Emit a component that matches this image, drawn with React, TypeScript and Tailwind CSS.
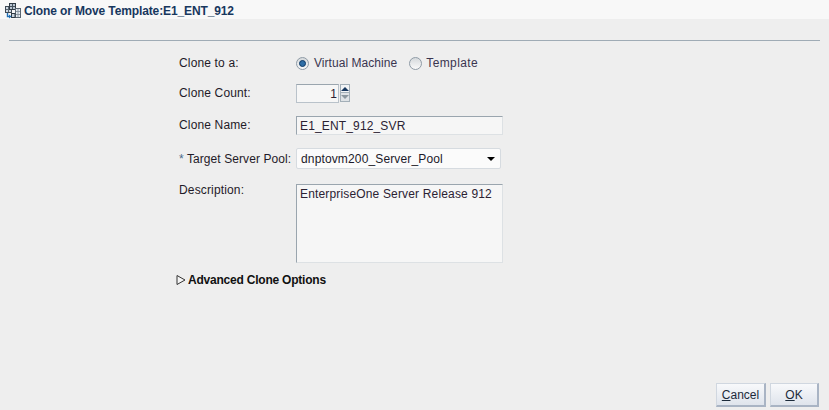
import React from 'react';

function TemplateIcon() {
  return (
    <svg width="16" height="17" viewBox="0 0 16 17" className="shrink-0">
      <rect x="0.5" y="4.5" width="6" height="6" fill="#cfd8e2" stroke="#3f4a55" />
      <path d="M1 7.5h5M3.5 5v5" stroke="#5a6672" />
      <rect x="4.5" y="1.5" width="6" height="6" fill="#b9c5d2" stroke="#2f3a45" />
      <path d="M5 4.5h5M7.5 2v5" stroke="#46525e" />
      <rect x="10.5" y="6.5" width="5" height="9" fill="#e8edf2" stroke="#5a6672" />
      <path d="M11 9.5h4M11 12.5h4M13 7v8" stroke="#8a96a2" />
      <rect x="6.5" y="11.5" width="3.5" height="4" fill="#c9d3de" stroke="#2f3a45" />
      <path d="M2.5 11v3.5h2" fill="none" stroke="#1f6fb5" strokeWidth="1.4" />
      <path d="M4 12.5l2.5 2-2.5 2z" fill="#1f6fb5" />
    </svg>
  );
}

function Radio({ checked }: { checked?: boolean }) {
  return (
    <span className="flex h-[13px] w-[13px] items-center justify-center rounded-full border border-[#8f9ba6] bg-gradient-to-b from-[#d5d9dc] to-[#fafafa]">
      {checked && <span className="h-[7px] w-[7px] rounded-full border border-[#0f3a66] bg-[#2f6ea6]" />}
    </span>
  );
}

function Row({ label, children, className }: { label: React.ReactNode; children: React.ReactNode; className?: string }) {
  return (
    <div className={`flex ${className ?? ''}`}>
      <div className="w-[117px] shrink-0 tracking-[0.15px] text-[#1f1a28]">{label}</div>
      {children}
    </div>
  );
}

function ActionButton({ hot, rest, width }: { hot: string; rest: string; width: string }) {
  return (
    <button className={`h-[24px] ${width} border border-b-2 border-r-2 border-[#a9b4c4] border-t-[#d0d7e0] border-l-[#d0d7e0] bg-gradient-to-b from-[#f8f9fb] to-[#dfe4ec] text-center text-[#1c2a3a]`}>
      <span className="underline">{hot}</span>
      {rest}
    </button>
  );
}

export default function App() {
  return (
    <div className="flex h-[410px] w-[829px] flex-col overflow-hidden bg-[#eeeeee] font-['Liberation_Sans',Arial,sans-serif] text-[12px] leading-[14px]">
      {/* Title */}
      <div className="flex h-[19px] items-center gap-[3px] bg-[#f8f8f8] pl-[5px] pt-[2px]">
        <TemplateIcon />
        <span className="font-bold tracking-[-0.12px] text-[#17375e]">Clone or Move Template:E1_ENT_912</span>
      </div>

      <div className="mx-[9px] mt-[21px] h-px bg-[#9fabb5]" />

      {/* Form */}
      <div className="ml-[179px] mt-[15px] flex flex-col">
        <Row label="Clone to a:" className="h-[14px] items-center">
          <div className="flex items-center">
            <span className="ml-0 mr-[5px]"><Radio checked /></span>
            <span className="tracking-[0.05px] text-[#3a3550]">Virtual Machine</span>
            <span className="ml-[12px] mr-[4px]"><Radio /></span>
            <span className="tracking-[0.4px] text-[#3a3550]">Template</span>
          </div>
        </Row>

        <Row label={<span className="relative -top-[1px]">Clone Count:</span>} className="mt-[14px] h-[19px] items-center">
          <div className="flex">
            <div className="flex h-[19px] w-[43px] items-center justify-end border border-[#b9c2ca] border-t-[#9aa5ae] bg-[#f6f6f6] pr-[1px] text-[#2b2233]">1</div>
            <div className="ml-px flex w-[10px] flex-col">
              <div className="flex h-[9px] items-center justify-center border border-[#a3afb8] bg-[#f2f4f6]">
                <span className="h-0 w-0 border-x-[4px] border-b-[4px] border-x-transparent border-b-[#17375e]" />
              </div>
              <div className="flex h-[9px] items-center justify-center border border-t-0 border-[#a3afb8] bg-[#dfe3e6]">
                <span className="h-0 w-0 border-x-[4px] border-t-[4px] border-x-transparent border-t-[#8b979f]" />
              </div>
            </div>
          </div>
        </Row>

        <Row label={<span className="relative -top-[1px]">Clone Name:</span>} className="mt-[13px] h-[19px] items-center">
          <div className="flex h-[19px] w-[207px] items-center border border-[#dde1e4] border-l-[#9aa5ae] border-t-[#9aa5ae] bg-[#f6f6f6] pl-[3px] tracking-[0.15px] text-[#2b2233]">E1_ENT_912_SVR</div>
        </Row>

        <Row label={<span className="tracking-[0.08px]"><span className="text-[#4a6a8a]">* </span>Target Server Pool:</span>} className="mt-[13px] h-[21px] items-center">
          <div className="flex h-[21px] w-[205px] items-center justify-between rounded-[2px] border border-[#d6dbe0] bg-[#fbfbfb] pl-[4px] pr-[3px] text-[#1c1a2a]">
            <span className="tracking-[0.14px]">dnptovm200_Server_Pool</span>
            <span className="mr-[2px] h-0 w-0 border-x-[4px] border-t-[4px] border-x-transparent border-t-black" />
          </div>
        </Row>

        <Row label={<span className="relative -top-[1px]">Description:</span>} className="mt-[15px]">
          <div className="h-[79px] w-[207px] border border-[#dde1e4] border-l-[#9aa5ae] border-t-[#9aa5ae] bg-[#f6f6f6] pl-[3px] pt-[2px] tracking-[0.16px] text-[#2b2233]">EnterpriseOne Server Release 912</div>
        </Row>

        <div className="-ml-[3px] mt-[10px] flex items-center gap-[2px] font-bold text-[#111111]">
          <svg width="10" height="10" viewBox="0 0 10 10"><path d="M1 0.5l8 4.5-8 4.5z" fill="#f4f4f4" stroke="#333" /></svg>
          <span className="tracking-[-0.22px]">Advanced Clone Options</span>
        </div>
      </div>

      {/* Buttons */}
      <div className="mb-[3px] mr-[10px] mt-auto flex justify-end gap-[4px]">
        <ActionButton hot="C" rest="ancel" width="w-[50px]" />
        <ActionButton hot="O" rest="K" width="w-[49px]" />
      </div>
    </div>
  );
}
